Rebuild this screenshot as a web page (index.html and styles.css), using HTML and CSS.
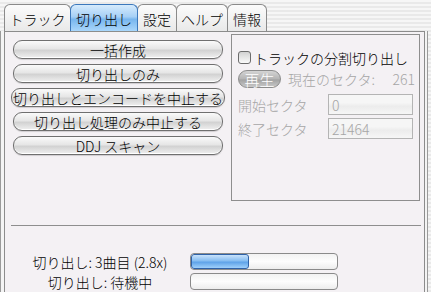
FILE: index.html
```html
<!DOCTYPE html>
<html lang="ja">
<head>
  <meta charset="UTF-8">
  <title>切り出し</title>
  <link rel="stylesheet" href="styles.css">
</head>
<body>

  <!-- タブ -->
  <div class="tabs">
    <div class="tab w-track">トラック</div>
    <div class="tab w-rip selected">切り出し</div>
    <div class="tab w-set">設定</div>
    <div class="tab w-help">ヘルプ</div>
    <div class="tab w-info">情報</div>
  </div>

  <div class="panel">
    <div class="top">
      <div class="buttons">
        <div class="btn">一括作成</div>
        <div class="btn">切り出しのみ</div>
        <div class="btn wide">切り出しとエンコードを中止する</div>
        <div class="btn">切り出し処理のみ中止する</div>
        <div class="btn">DDJ スキャン</div>
      </div>

      <div class="group">
        <label class="check-row">
          <span class="checkbox"></span>
          <span>トラックの分割切り出し</span>
        </label>
        <div class="play-row">
          <span class="play">再生</span>
          <span class="dim">現在のセクタ:</span>
          <span class="dim num">261</span>
        </div>
        <div class="field-row">
          <span class="dim">開始セクタ</span>
          <span class="field">0</span>
        </div>
        <div class="field-row">
          <span class="dim">終了セクタ</span>
          <span class="field">21464</span>
        </div>
      </div>
    </div>

    <div class="sep"></div>

    <div class="status">
      <div class="label">切り出し: 3曲目 (2.8x)</div>
      <div class="bar"><div class="fill" style="width: 58px"></div></div>
      <div class="label">切り出し: 待機中</div>
      <div class="bar"></div>
    </div>
  </div>

</body>
</html>
```

FILE: styles.css
```css
html, body {
  margin: 0;
  padding: 0;
  height: 100%;
  overflow: hidden;
}

body {
  font-family: "Noto Sans CJK JP", "DejaVu Sans", sans-serif;
  font-size: 14px;
  font-weight: 300;
  color: #000;
  background: repeating-linear-gradient(to bottom, #f6f6f6 0, #f6f6f6 2px, #e9e9e9 2px, #e9e9e9 4px);
}

/* タブ */
.tabs {
  display: flex;
  height: 27px;
  padding: 4px 0 0 4px;
  box-sizing: content-box;
}

.tab {
  height: 27px;
  box-sizing: border-box;
  border: 1px solid #8a8a8a;
  border-bottom: none;
  border-radius: 6px 6px 0 0;
  background: linear-gradient(#fbfbfb, #e9e9e9);
  display: flex;
  justify-content: center;
  align-items: center;
  line-height: 1;
  padding-top: 2px;
  margin-left: -1px;
}

.tab:first-child {
  margin-left: 0;
}

.tab.selected {
  border-color: #3c78bc;
  background: linear-gradient(#d6ebfc 0%, #a6d0f6 45%, #78b6ee 55%, #a9d6fb 100%);
  position: relative;
  z-index: 1;
}

.w-track { width: 67px; }
.w-rip { width: 68px; }
.w-set { width: 40px; }
.w-help { width: 52px; }
.w-info { width: 40px; }

/* パネル */
.panel {
  margin: 0 6px 0 4px;
  height: 261px;
  border: 1px solid #8c8c8c;
  border-bottom: none;
  background: #f4f1f4;
  box-shadow: -3px 0 0 #f4f4f4, -4px 0 0 #9a9a9a, 2px 0 0 #f4f4f4, 3px 0 0 #9a9a9a;
}

.top {
  display: flex;
  gap: 8px;
  padding: 2px 0 0 8px;
}

.buttons {
  width: 210px;
  display: flex;
  flex-direction: column;
  gap: 5px;
  margin-top: 6px;
}

.btn {
  height: 19px;
  box-sizing: border-box;
  border: 1px solid #6f6f6f;
  border-radius: 9px;
  background: linear-gradient(#fafafa 0%, #e6e6e6 45%, #d2d2d2 55%, #f0f0f0 100%);
  box-shadow: inset 0 -1px 0 #ffffff, 0 1px 1px rgba(0, 0, 0, 0.15);
  display: flex;
  justify-content: center;
  align-items: center;
  line-height: 1;
  white-space: nowrap;
}

.btn.wide {
  margin: 0 -2px;
}

/* 分割切り出し */
.group {
  width: 189px;
  height: 167px;
  box-sizing: border-box;
  border: 1px solid #8e8e8e;
  padding: 15px 4px 0 6px;
  display: flex;
  flex-direction: column;
}

.check-row {
  display: flex;
  align-items: center;
  gap: 3px;
  line-height: 1;
  height: 15px;
}

.checkbox {
  width: 13px;
  height: 13px;
  box-sizing: border-box;
  border: 1px solid #6c6c6c;
  border-radius: 3px;
  background: linear-gradient(#d2d2d2, #fafafa);
}

.play-row {
  display: flex;
  align-items: center;
  margin-top: 5px;
  height: 18px;
  line-height: 1;
}

.play {
  width: 43px;
  height: 18px;
  box-sizing: border-box;
  border: 1px solid #8c8c8c;
  border-radius: 9px;
  background: linear-gradient(#d4d4d4 0%, #b4b4b4 50%, #a2a2a2 55%, #c8c8c8 100%);
  color: #ffffff;
  font-size: 15px;
  display: flex;
  justify-content: center;
  align-items: center;
  margin-right: 7px;
}

.dim {
  color: #a6a6a6;
}

.num {
  margin-left: auto;
}

.field-row {
  display: flex;
  align-items: center;
  justify-content: space-between;
  line-height: 1;
  height: 21px;
  margin-top: 3px;
}

.play-row + .field-row {
  margin-top: 6px;
}

.field {
  width: 85px;
  height: 21px;
  box-sizing: border-box;
  border: 1px solid #b4b4b4;
  background: linear-gradient(#f6f6f6 0, #f6f6f6 40%, #ececec 60%, #f6f6f6 100%);
  color: #a6a6a6;
  padding: 3px 0 0 3px;
  margin-right: 2px;
}

/* 状態 */
.sep {
  margin: 24px 3px 0 6px;
  height: 1px;
  background: #8e8e8e;
}

.status {
  display: grid;
  grid-template-columns: 174px 148px;
  column-gap: 3px;
  row-gap: 3px;
  padding: 27px 0 0 8px;
  align-items: center;
}

.label {
  text-align: center;
  line-height: 1;
  white-space: nowrap;
}

.bar {
  height: 17px;
  box-sizing: border-box;
  border: 1px solid #8a8a8a;
  border-radius: 4px;
  background: linear-gradient(#f2f2f2, #fdfdfd 50%, #ededed);
  overflow: hidden;
}

.fill {
  height: 100%;
  box-sizing: border-box;
  border: 1px solid #2f62a8;
  border-radius: 3px;
  background: linear-gradient(#c8e2fb 0%, #86bdf1 45%, #5fa3e8 55%, #9fd0fb 100%);
}
```
